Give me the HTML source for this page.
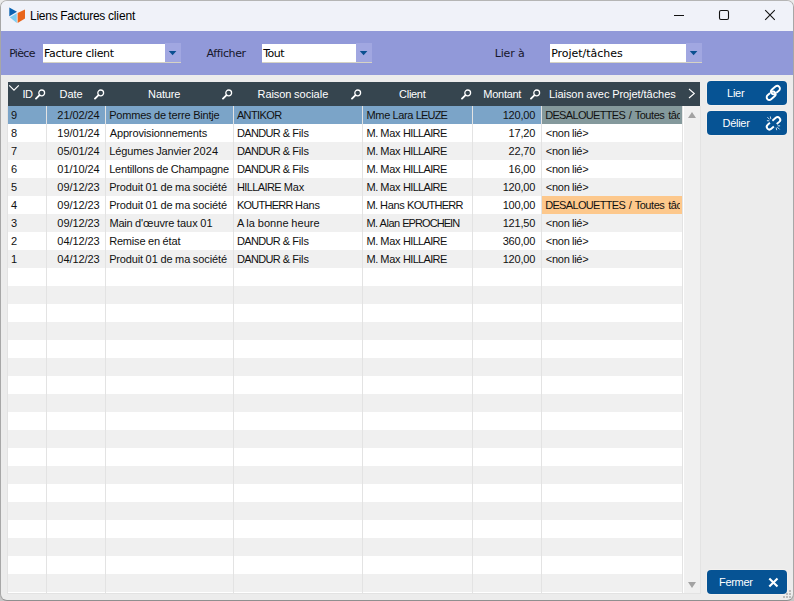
<!DOCTYPE html>
<html><head><meta charset="utf-8"><title>Liens Factures client</title>
<style>
html,body{margin:0;padding:0}
body{width:794px;height:601px;background:linear-gradient(#ebebeb,#ebebeb 50%,#c6c6c6 50%);overflow:hidden;position:relative;font-family:"Liberation Sans",sans-serif}
.abs{position:absolute}
.t{position:absolute;white-space:pre;display:block}
#win{position:absolute;left:0;top:0;width:792px;height:599px;border:1px solid #a7a7a7;border-top-color:#b5b5b5;border-bottom-color:#8f8f8f;border-radius:7px;background:#ececec;overflow:hidden}
#in{position:absolute;left:-1px;top:-1px;width:794px;height:601px}
#title{position:absolute;left:0;top:0;width:794px;height:31px;background:#f0f2f9}
#band{position:absolute;left:0;top:31px;width:794px;height:44px;background:#9199d9}
.sel{position:absolute;top:44px;height:18px;background:#fff;border-bottom:1px solid #d6d3c4}
.arr{position:absolute;top:43px;height:19px;width:16px;background:#a1a7e1;border-bottom:1px solid #d6d3c4}
.arr svg{position:absolute;left:0;top:0}
#hdr{position:absolute;left:8px;top:82px;width:692px;height:24px;background:#36454f}
.row{position:absolute;left:8px;width:674px;height:18px}
.c{position:absolute;top:0;height:18px;overflow:hidden}
.vl{position:absolute;top:106px;width:1px;height:487px;background:#e3e3e3}
.btn{position:absolute;left:707px;width:80px;height:24px;background:#065394;border-radius:4px;box-shadow:0 0 0 1px rgba(255,250,246,.4)}
</style></head><body>
<div id="win"><div id="in">
<div id="title">
<svg class="abs" style="left:9px;top:7px" width="17" height="17" viewBox="0 0 17 17"><polygon points="0.3,0.5 8,4.8 0.3,9.2" fill="#0a63b2"/><polygon points="0.8,10.2 7.8,6.2 7.8,16 " fill="#7fcdf0"/><polygon points="8.6,6 16,2.6 16,11.6 8.6,16" fill="#e9651b"/></svg>
<svg class="abs" style="left:670px;top:5px" width="110" height="20" viewBox="0 0 110 20"><path d="M4 10.500h10" stroke="#111" stroke-width="1" fill="none"/><rect x="49.500" y="5.500" width="9" height="9" rx="1.500" stroke="#111" stroke-width="1.100" fill="none"/><path d="M95.200 5.200l9.600 9.600M104.800 5.200l-9.600 9.600" stroke="#111" stroke-width="1.100" fill="none"/></svg>
</div>
<div id="band"></div>
<div class="sel" style="left:43px;width:122px"></div><div class="arr" style="left:165px"><svg width="16" height="20" viewBox="0 0 16 20"><polygon points="3.800,7.900 11.400,7.900 7.600,12.300" fill="#0a4f90"/></svg></div>
<div class="sel" style="left:262px;width:94px"></div><div class="arr" style="left:356px"><svg width="16" height="20" viewBox="0 0 16 20"><polygon points="3.800,7.900 11.400,7.900 7.600,12.300" fill="#0a4f90"/></svg></div>
<div class="sel" style="left:550px;width:136px"></div><div class="arr" style="left:686px"><svg width="16" height="20" viewBox="0 0 16 20"><polygon points="3.800,7.900 11.400,7.900 7.600,12.300" fill="#0a4f90"/></svg></div>
<div id="hdr"></div>
<svg class="abs" style="left:8px;top:83px" width="14" height="10" viewBox="0 0 14 10"><path d="M1.200 2.300L6 7.200L10.800 2.300" stroke="#fff" stroke-width="1.200" fill="none"/></svg>
<svg class="abs" style="left:686px;top:86px" width="12" height="14" viewBox="0 0 12 14"><path d="M3 3L8.300 7.500L3 12" stroke="#fff" stroke-width="1.100" fill="none"/></svg>

<svg class="abs" style="left:34.5px;top:89px" width="11" height="11" viewBox="0 0 11 11"><circle cx="6.7" cy="3.9" r="2.9" fill="none" stroke="#fff" stroke-width="1.3"/><path d="M4.5 6.1L1 9.6" stroke="#fff" stroke-width="1.9" stroke-linecap="round"/></svg>
<svg class="abs" style="left:93.5px;top:89px" width="11" height="11" viewBox="0 0 11 11"><circle cx="6.7" cy="3.9" r="2.9" fill="none" stroke="#fff" stroke-width="1.3"/><path d="M4.5 6.1L1 9.6" stroke="#fff" stroke-width="1.9" stroke-linecap="round"/></svg>
<svg class="abs" style="left:221.5px;top:89px" width="11" height="11" viewBox="0 0 11 11"><circle cx="6.7" cy="3.9" r="2.9" fill="none" stroke="#fff" stroke-width="1.3"/><path d="M4.5 6.1L1 9.6" stroke="#fff" stroke-width="1.9" stroke-linecap="round"/></svg>
<svg class="abs" style="left:350.5px;top:89px" width="11" height="11" viewBox="0 0 11 11"><circle cx="6.7" cy="3.9" r="2.9" fill="none" stroke="#fff" stroke-width="1.3"/><path d="M4.5 6.1L1 9.6" stroke="#fff" stroke-width="1.9" stroke-linecap="round"/></svg>
<svg class="abs" style="left:460.5px;top:89px" width="11" height="11" viewBox="0 0 11 11"><circle cx="6.7" cy="3.9" r="2.9" fill="none" stroke="#fff" stroke-width="1.3"/><path d="M4.5 6.1L1 9.6" stroke="#fff" stroke-width="1.9" stroke-linecap="round"/></svg>
<svg class="abs" style="left:529.5px;top:89px" width="11" height="11" viewBox="0 0 11 11"><circle cx="6.7" cy="3.9" r="2.9" fill="none" stroke="#fff" stroke-width="1.3"/><path d="M4.5 6.1L1 9.6" stroke="#fff" stroke-width="1.9" stroke-linecap="round"/></svg>
<div class="abs" style="left:7px;top:106px;width:694px;height:488px;background:#e3e3e3"></div>
<div class="abs" style="left:8px;top:106px;width:674px;height:487px;background:#fff"></div>
<div class="abs" style="left:683px;top:106px;width:17px;height:487px;background:#f0f0f0;border-left:1px solid #fff;box-sizing:border-box"></div>
<div class="row" style="top:106px;background:#7ba4c8">
<div class="c" style="left:0px;width:38px;"><span class="t" style="left:2.95px;top:1.19px;font:normal 11px/16px 'Liberation Sans',sans-serif;letter-spacing:0.08px;color:#111">9</span></div>
<div class="c" style="left:39px;width:58px;"><span class="t" style="left:10.35px;top:1.19px;font:normal 11px/16px 'Liberation Sans',sans-serif;letter-spacing:-0.06px;color:#111">21/02/24</span></div>
<div class="c" style="left:98px;width:127px;"><span class="t" style="left:3.20px;top:1.19px;font:normal 11px/16px 'Liberation Sans',sans-serif;letter-spacing:-0.21px;word-spacing:-0.31px;color:#111">Pommes <span style="letter-spacing:-0.10px">de</span> <span style="letter-spacing:-0.10px">terre</span> Bintje</span></div>
<div class="c" style="left:226px;width:128px;"><span class="t" style="left:2.90px;top:1.19px;font:normal 11px/16px 'Liberation Sans',sans-serif;letter-spacing:-0.61px;color:#111">ANTIKOR</span></div>
<div class="c" style="left:355px;width:109px;"><span class="t" style="left:3.55px;top:1.19px;font:normal 11px/16px 'Liberation Sans',sans-serif;letter-spacing:-0.80px;word-spacing:0.23px;color:#111"><span style="letter-spacing:-0.37px">Mme</span> <span style="letter-spacing:-0.32px">Lara</span> LEUZE</span></div>
<div class="c" style="left:465px;width:68px;"><span class="t" style="left:29.65px;top:1.19px;font:normal 11px/16px 'Liberation Sans',sans-serif;letter-spacing:-0.20px;color:#111">120,00</span></div>
<div class="c" style="left:534px;width:140px;background:#84999c;"><div class="c" style="left:0;width:138px"><span class="t" style="left:3.21px;top:1.19px;font:normal 11px/16px 'Liberation Sans',sans-serif;letter-spacing:-0.68px;word-spacing:1.38px;color:#111">DESALOUETTES <span style="letter-spacing:-1.00px">/</span> <span style="letter-spacing:-0.45px">Toutes</span> <span style="letter-spacing:-0.40px">tâches</span></span></div></div>
</div>
<div class="row" style="top:124px;background:#ffffff">
<div class="c" style="left:0px;width:38px;"><span class="t" style="left:2.95px;top:1.19px;font:normal 11px/16px 'Liberation Sans',sans-serif;letter-spacing:0.08px;color:#111">8</span></div>
<div class="c" style="left:39px;width:58px;"><span class="t" style="left:10.35px;top:1.19px;font:normal 11px/16px 'Liberation Sans',sans-serif;letter-spacing:-0.06px;color:#111">19/01/24</span></div>
<div class="c" style="left:98px;width:127px;"><span class="t" style="left:3.70px;top:1.19px;font:normal 11px/16px 'Liberation Sans',sans-serif;letter-spacing:-0.13px;color:#111">Approvisionnements</span></div>
<div class="c" style="left:226px;width:128px;"><span class="t" style="left:3.00px;top:1.19px;font:normal 11px/16px 'Liberation Sans',sans-serif;letter-spacing:-0.66px;word-spacing:0.23px;color:#111">DANDUR <span style="letter-spacing:-0.43px">&amp;</span> <span style="letter-spacing:-0.17px">Fils</span></span></div>
<div class="c" style="left:355px;width:109px;"><span class="t" style="left:3.55px;top:1.19px;font:normal 11px/16px 'Liberation Sans',sans-serif;letter-spacing:-0.67px;word-spacing:0.23px;color:#111"><span style="letter-spacing:-0.55px">M.</span> <span style="letter-spacing:-0.23px">Max</span> HILLAIRE</span></div>
<div class="c" style="left:465px;width:68px;"><span class="t" style="left:35.62px;top:1.19px;font:normal 11px/16px 'Liberation Sans',sans-serif;letter-spacing:-0.22px;color:#111">17,20</span></div>
<div class="c" style="left:534px;width:140px;"><div class="c" style="left:0;width:138px"><span class="t" style="left:3.75px;top:1.19px;font:normal 11px/16px 'Liberation Sans',sans-serif;letter-spacing:-0.26px;word-spacing:-0.32px;color:#111">&lt;non lié&gt;</span></div></div>
</div>
<div class="row" style="top:142px;background:#f0f0f0">
<div class="c" style="left:0px;width:38px;"><span class="t" style="left:2.95px;top:1.19px;font:normal 11px/16px 'Liberation Sans',sans-serif;letter-spacing:0.08px;color:#111">7</span></div>
<div class="c" style="left:39px;width:58px;"><span class="t" style="left:10.35px;top:1.19px;font:normal 11px/16px 'Liberation Sans',sans-serif;letter-spacing:-0.06px;color:#111">05/01/24</span></div>
<div class="c" style="left:98px;width:127px;"><span class="t" style="left:3.20px;top:1.19px;font:normal 11px/16px 'Liberation Sans',sans-serif;letter-spacing:-0.13px;word-spacing:-0.33px;color:#111">Légumes Janvier <span style="letter-spacing:0.10px">2024</span></span></div>
<div class="c" style="left:226px;width:128px;"><span class="t" style="left:3.00px;top:1.19px;font:normal 11px/16px 'Liberation Sans',sans-serif;letter-spacing:-0.66px;word-spacing:0.23px;color:#111">DANDUR <span style="letter-spacing:-0.43px">&amp;</span> <span style="letter-spacing:-0.17px">Fils</span></span></div>
<div class="c" style="left:355px;width:109px;"><span class="t" style="left:3.55px;top:1.19px;font:normal 11px/16px 'Liberation Sans',sans-serif;letter-spacing:-0.67px;word-spacing:0.23px;color:#111"><span style="letter-spacing:-0.55px">M.</span> <span style="letter-spacing:-0.23px">Max</span> HILLAIRE</span></div>
<div class="c" style="left:465px;width:68px;"><span class="t" style="left:35.62px;top:1.19px;font:normal 11px/16px 'Liberation Sans',sans-serif;letter-spacing:-0.22px;color:#111">22,70</span></div>
<div class="c" style="left:534px;width:140px;"><div class="c" style="left:0;width:138px"><span class="t" style="left:3.75px;top:1.19px;font:normal 11px/16px 'Liberation Sans',sans-serif;letter-spacing:-0.26px;word-spacing:-0.32px;color:#111">&lt;non lié&gt;</span></div></div>
</div>
<div class="row" style="top:160px;background:#ffffff">
<div class="c" style="left:0px;width:38px;"><span class="t" style="left:2.95px;top:1.19px;font:normal 11px/16px 'Liberation Sans',sans-serif;letter-spacing:0.08px;color:#111">6</span></div>
<div class="c" style="left:39px;width:58px;"><span class="t" style="left:10.35px;top:1.19px;font:normal 11px/16px 'Liberation Sans',sans-serif;letter-spacing:-0.06px;color:#111">01/10/24</span></div>
<div class="c" style="left:98px;width:127px;"><span class="t" style="left:3.20px;top:1.19px;font:normal 11px/16px 'Liberation Sans',sans-serif;letter-spacing:-0.19px;word-spacing:-0.35px;color:#111">Lentillons <span style="letter-spacing:-0.12px">de</span> <span style="letter-spacing:-0.20px">Champagne</span></span></div>
<div class="c" style="left:226px;width:128px;"><span class="t" style="left:3.00px;top:1.19px;font:normal 11px/16px 'Liberation Sans',sans-serif;letter-spacing:-0.66px;word-spacing:0.23px;color:#111">DANDUR <span style="letter-spacing:-0.43px">&amp;</span> <span style="letter-spacing:-0.17px">Fils</span></span></div>
<div class="c" style="left:355px;width:109px;"><span class="t" style="left:3.55px;top:1.19px;font:normal 11px/16px 'Liberation Sans',sans-serif;letter-spacing:-0.67px;word-spacing:0.23px;color:#111"><span style="letter-spacing:-0.55px">M.</span> <span style="letter-spacing:-0.23px">Max</span> HILLAIRE</span></div>
<div class="c" style="left:465px;width:68px;"><span class="t" style="left:35.62px;top:1.19px;font:normal 11px/16px 'Liberation Sans',sans-serif;letter-spacing:-0.22px;color:#111">16,00</span></div>
<div class="c" style="left:534px;width:140px;"><div class="c" style="left:0;width:138px"><span class="t" style="left:3.75px;top:1.19px;font:normal 11px/16px 'Liberation Sans',sans-serif;letter-spacing:-0.26px;word-spacing:-0.32px;color:#111">&lt;non lié&gt;</span></div></div>
</div>
<div class="row" style="top:178px;background:#f0f0f0">
<div class="c" style="left:0px;width:38px;"><span class="t" style="left:2.95px;top:1.19px;font:normal 11px/16px 'Liberation Sans',sans-serif;letter-spacing:0.08px;color:#111">5</span></div>
<div class="c" style="left:39px;width:58px;"><span class="t" style="left:10.35px;top:1.19px;font:normal 11px/16px 'Liberation Sans',sans-serif;letter-spacing:-0.06px;color:#111">09/12/23</span></div>
<div class="c" style="left:98px;width:127px;"><span class="t" style="left:3.20px;top:1.19px;font:normal 11px/16px 'Liberation Sans',sans-serif;letter-spacing:-0.07px;word-spacing:-0.42px;color:#111"><span style="letter-spacing:-0.17px">Produit</span> <span style="letter-spacing:0.07px">01</span> de ma société</span></div>
<div class="c" style="left:226px;width:128px;"><span class="t" style="left:3.00px;top:1.19px;font:normal 11px/16px 'Liberation Sans',sans-serif;letter-spacing:-0.60px;word-spacing:0.23px;color:#111">HILLAIRE <span style="letter-spacing:-0.17px">Max</span></span></div>
<div class="c" style="left:355px;width:109px;"><span class="t" style="left:3.55px;top:1.19px;font:normal 11px/16px 'Liberation Sans',sans-serif;letter-spacing:-0.67px;word-spacing:0.23px;color:#111"><span style="letter-spacing:-0.55px">M.</span> <span style="letter-spacing:-0.23px">Max</span> HILLAIRE</span></div>
<div class="c" style="left:465px;width:68px;"><span class="t" style="left:29.65px;top:1.19px;font:normal 11px/16px 'Liberation Sans',sans-serif;letter-spacing:-0.20px;color:#111">120,00</span></div>
<div class="c" style="left:534px;width:140px;"><div class="c" style="left:0;width:138px"><span class="t" style="left:3.75px;top:1.19px;font:normal 11px/16px 'Liberation Sans',sans-serif;letter-spacing:-0.26px;word-spacing:-0.32px;color:#111">&lt;non lié&gt;</span></div></div>
</div>
<div class="row" style="top:196px;background:#ffffff">
<div class="c" style="left:0px;width:38px;"><span class="t" style="left:2.95px;top:1.19px;font:normal 11px/16px 'Liberation Sans',sans-serif;letter-spacing:0.08px;color:#111">4</span></div>
<div class="c" style="left:39px;width:58px;"><span class="t" style="left:10.35px;top:1.19px;font:normal 11px/16px 'Liberation Sans',sans-serif;letter-spacing:-0.06px;color:#111">09/12/23</span></div>
<div class="c" style="left:98px;width:127px;"><span class="t" style="left:3.20px;top:1.19px;font:normal 11px/16px 'Liberation Sans',sans-serif;letter-spacing:-0.07px;word-spacing:-0.42px;color:#111"><span style="letter-spacing:-0.17px">Produit</span> <span style="letter-spacing:0.07px">01</span> de ma société</span></div>
<div class="c" style="left:226px;width:128px;"><span class="t" style="left:3.00px;top:1.19px;font:normal 11px/16px 'Liberation Sans',sans-serif;letter-spacing:-0.77px;word-spacing:0.23px;color:#111">KOUTHERR <span style="letter-spacing:-0.28px">Hans</span></span></div>
<div class="c" style="left:355px;width:109px;"><span class="t" style="left:3.55px;top:1.19px;font:normal 11px/16px 'Liberation Sans',sans-serif;letter-spacing:-0.77px;word-spacing:0.23px;color:#111"><span style="letter-spacing:-0.65px">M.</span> <span style="letter-spacing:-0.28px">Hans</span> KOUTHERR</span></div>
<div class="c" style="left:465px;width:68px;"><span class="t" style="left:29.65px;top:1.19px;font:normal 11px/16px 'Liberation Sans',sans-serif;letter-spacing:-0.20px;color:#111">100,00</span></div>
<div class="c" style="left:534px;width:140px;background:#fdc88c;"><div class="c" style="left:0;width:138px"><span class="t" style="left:3.21px;top:1.19px;font:normal 11px/16px 'Liberation Sans',sans-serif;letter-spacing:-0.68px;word-spacing:1.38px;color:#111">DESALOUETTES <span style="letter-spacing:-1.00px">/</span> <span style="letter-spacing:-0.45px">Toutes</span> <span style="letter-spacing:-0.40px">tâches</span></span></div></div>
</div>
<div class="row" style="top:214px;background:#f0f0f0">
<div class="c" style="left:0px;width:38px;"><span class="t" style="left:2.95px;top:1.19px;font:normal 11px/16px 'Liberation Sans',sans-serif;letter-spacing:0.08px;color:#111">3</span></div>
<div class="c" style="left:39px;width:58px;"><span class="t" style="left:10.35px;top:1.19px;font:normal 11px/16px 'Liberation Sans',sans-serif;letter-spacing:-0.06px;color:#111">09/12/23</span></div>
<div class="c" style="left:98px;width:127px;"><span class="t" style="left:3.45px;top:1.19px;font:normal 11px/16px 'Liberation Sans',sans-serif;letter-spacing:-0.10px;word-spacing:-0.36px;color:#111"><span style="letter-spacing:-0.20px">Main</span> d'œuvre <span style="letter-spacing:-0.04px">taux</span> <span style="letter-spacing:0.10px">01</span></span></div>
<div class="c" style="left:226px;width:128px;"><span class="t" style="left:2.90px;top:1.19px;font:normal 11px/16px 'Liberation Sans',sans-serif;letter-spacing:0.06px;word-spacing:-0.42px;color:#111"><span style="letter-spacing:-0.59px">A</span> la bonne heure</span></div>
<div class="c" style="left:355px;width:109px;"><span class="t" style="left:3.55px;top:1.19px;font:normal 11px/16px 'Liberation Sans',sans-serif;letter-spacing:-0.92px;word-spacing:0.23px;color:#111"><span style="letter-spacing:-0.81px">M.</span> <span style="letter-spacing:-0.44px">Alan</span> EPROCHEIN</span></div>
<div class="c" style="left:465px;width:68px;"><span class="t" style="left:29.65px;top:1.19px;font:normal 11px/16px 'Liberation Sans',sans-serif;letter-spacing:-0.20px;color:#111">121,50</span></div>
<div class="c" style="left:534px;width:140px;"><div class="c" style="left:0;width:138px"><span class="t" style="left:3.75px;top:1.19px;font:normal 11px/16px 'Liberation Sans',sans-serif;letter-spacing:-0.26px;word-spacing:-0.32px;color:#111">&lt;non lié&gt;</span></div></div>
</div>
<div class="row" style="top:232px;background:#ffffff">
<div class="c" style="left:0px;width:38px;"><span class="t" style="left:2.95px;top:1.19px;font:normal 11px/16px 'Liberation Sans',sans-serif;letter-spacing:0.08px;color:#111">2</span></div>
<div class="c" style="left:39px;width:58px;"><span class="t" style="left:10.35px;top:1.19px;font:normal 11px/16px 'Liberation Sans',sans-serif;letter-spacing:-0.06px;color:#111">04/12/23</span></div>
<div class="c" style="left:98px;width:127px;"><span class="t" style="left:3.20px;top:1.19px;font:normal 11px/16px 'Liberation Sans',sans-serif;letter-spacing:-0.19px;word-spacing:-0.31px;color:#111">Remise <span style="letter-spacing:-0.08px">en</span> <span style="letter-spacing:-0.08px">état</span></span></div>
<div class="c" style="left:226px;width:128px;"><span class="t" style="left:3.00px;top:1.19px;font:normal 11px/16px 'Liberation Sans',sans-serif;letter-spacing:-0.66px;word-spacing:0.23px;color:#111">DANDUR <span style="letter-spacing:-0.43px">&amp;</span> <span style="letter-spacing:-0.17px">Fils</span></span></div>
<div class="c" style="left:355px;width:109px;"><span class="t" style="left:3.55px;top:1.19px;font:normal 11px/16px 'Liberation Sans',sans-serif;letter-spacing:-0.67px;word-spacing:0.23px;color:#111"><span style="letter-spacing:-0.55px">M.</span> <span style="letter-spacing:-0.23px">Max</span> HILLAIRE</span></div>
<div class="c" style="left:465px;width:68px;"><span class="t" style="left:29.65px;top:1.19px;font:normal 11px/16px 'Liberation Sans',sans-serif;letter-spacing:-0.20px;color:#111">360,00</span></div>
<div class="c" style="left:534px;width:140px;"><div class="c" style="left:0;width:138px"><span class="t" style="left:3.75px;top:1.19px;font:normal 11px/16px 'Liberation Sans',sans-serif;letter-spacing:-0.26px;word-spacing:-0.32px;color:#111">&lt;non lié&gt;</span></div></div>
</div>
<div class="row" style="top:250px;background:#f0f0f0">
<div class="c" style="left:0px;width:38px;"><span class="t" style="left:2.95px;top:1.19px;font:normal 11px/16px 'Liberation Sans',sans-serif;letter-spacing:0.08px;color:#111">1</span></div>
<div class="c" style="left:39px;width:58px;"><span class="t" style="left:10.35px;top:1.19px;font:normal 11px/16px 'Liberation Sans',sans-serif;letter-spacing:-0.06px;color:#111">04/12/23</span></div>
<div class="c" style="left:98px;width:127px;"><span class="t" style="left:3.20px;top:1.19px;font:normal 11px/16px 'Liberation Sans',sans-serif;letter-spacing:-0.07px;word-spacing:-0.42px;color:#111"><span style="letter-spacing:-0.17px">Produit</span> <span style="letter-spacing:0.07px">01</span> de ma société</span></div>
<div class="c" style="left:226px;width:128px;"><span class="t" style="left:3.00px;top:1.19px;font:normal 11px/16px 'Liberation Sans',sans-serif;letter-spacing:-0.66px;word-spacing:0.23px;color:#111">DANDUR <span style="letter-spacing:-0.43px">&amp;</span> <span style="letter-spacing:-0.17px">Fils</span></span></div>
<div class="c" style="left:355px;width:109px;"><span class="t" style="left:3.55px;top:1.19px;font:normal 11px/16px 'Liberation Sans',sans-serif;letter-spacing:-0.67px;word-spacing:0.23px;color:#111"><span style="letter-spacing:-0.55px">M.</span> <span style="letter-spacing:-0.23px">Max</span> HILLAIRE</span></div>
<div class="c" style="left:465px;width:68px;"><span class="t" style="left:29.65px;top:1.19px;font:normal 11px/16px 'Liberation Sans',sans-serif;letter-spacing:-0.20px;color:#111">120,00</span></div>
<div class="c" style="left:534px;width:140px;"><div class="c" style="left:0;width:138px"><span class="t" style="left:3.75px;top:1.19px;font:normal 11px/16px 'Liberation Sans',sans-serif;letter-spacing:-0.26px;word-spacing:-0.32px;color:#111">&lt;non lié&gt;</span></div></div>
</div>
<div class="row" style="top:268px;background:#ffffff">
</div>
<div class="row" style="top:286px;background:#f0f0f0">
</div>
<div class="row" style="top:304px;background:#ffffff">
</div>
<div class="row" style="top:322px;background:#f0f0f0">
</div>
<div class="row" style="top:340px;background:#ffffff">
</div>
<div class="row" style="top:358px;background:#f0f0f0">
</div>
<div class="row" style="top:376px;background:#ffffff">
</div>
<div class="row" style="top:394px;background:#f0f0f0">
</div>
<div class="row" style="top:412px;background:#ffffff">
</div>
<div class="row" style="top:430px;background:#f0f0f0">
</div>
<div class="row" style="top:448px;background:#ffffff">
</div>
<div class="row" style="top:466px;background:#f0f0f0">
</div>
<div class="row" style="top:484px;background:#ffffff">
</div>
<div class="row" style="top:502px;background:#f0f0f0">
</div>
<div class="row" style="top:520px;background:#ffffff">
</div>
<div class="row" style="top:538px;background:#f0f0f0">
</div>
<div class="row" style="top:556px;background:#ffffff">
</div>
<div class="row" style="top:574px;background:#f0f0f0">
</div>
<div class="vl" style="left:46px"></div>
<div class="vl" style="left:105px"></div>
<div class="vl" style="left:233px"></div>
<div class="vl" style="left:362px"></div>
<div class="vl" style="left:472px"></div>
<div class="vl" style="left:541px"></div>
<svg class="abs" style="left:687px;top:111px" width="10" height="8" viewBox="0 0 10 8"><polygon points="1,7 5,1 9,7" fill="#a3a3a3"/></svg>
<svg class="abs" style="left:687px;top:581px" width="10" height="8" viewBox="0 0 10 8"><polygon points="1,1 5,7 9,1" fill="#a3a3a3"/></svg>
<div class="btn" style="top:81px"></div><div class="btn" style="top:111px"></div><div class="btn" style="top:570px"></div>
<div class="abs" style="left:789px;top:590px;width:2px;height:2px;background:#bcbcbc"></div><div class="abs" style="left:786px;top:593px;width:2px;height:2px;background:#bcbcbc"></div><div class="abs" style="left:789px;top:593px;width:2px;height:2px;background:#bcbcbc"></div><div class="abs" style="left:783px;top:596px;width:2px;height:2px;background:#bcbcbc"></div><div class="abs" style="left:786px;top:596px;width:2px;height:2px;background:#bcbcbc"></div><div class="abs" style="left:789px;top:596px;width:2px;height:2px;background:#bcbcbc"></div>
<svg class="abs" style="left:764px;top:84px" width="19" height="19" viewBox="0 0 19 19"><g transform="translate(9.300 8.900) rotate(-41)" fill="none" stroke="#fff" stroke-width="1.900" stroke-linecap="round"><path d="M-0.4 -2.0L-1.2 -2.0A2.7 2.7 0 0 1 -1.2 3.4L-5.8 3.4A2.7 2.7 0 0 1 -5.8 -2.0L-3.2 -2.0"/><path d="M0.4 2.0L1.2 2.0A2.7 2.7 0 0 1 1.2 -3.4L5.8 -3.4A2.7 2.7 0 0 1 5.8 2.0L3.2 2.0"/></g></svg>
<svg class="abs" style="left:764px;top:114px" width="19" height="19" viewBox="0 0 19 19"><g transform="translate(9.500 9.300) rotate(-41)" fill="none" stroke="#fff"><path d="M-2.4 -2.7L-5.3 -2.7A2.7 2.7 0 0 0 -5.3 2.7L-1.9 2.7" stroke-width="1.900"/><path d="M0.9 -2.7L5.3 -2.7A2.7 2.7 0 0 1 5.3 2.7L1.9 2.7" stroke-width="1.900"/><path d="M-0.6 -8.6L-0.4 -5.5M2.1 -7.3L0.8 -5M-3.3 -6.3L-1.5 -4.6M0.6 8.6L0.4 5.5M-2.1 7.3L-0.8 5M3.3 6.3L1.5 4.6" stroke-width="0.750"/></g></svg>
<svg class="abs" style="left:768px;top:577px" width="11" height="11" viewBox="0 0 11 11"><path d="M1.300 1.400l8.200 8.200M9.500 1.400l-8.200 8.200" stroke="#fff" stroke-width="2.100" fill="none"/></svg>

<span class="t" style="left:30.06px;top:8.24px;font:normal 12px/16px 'Liberation Sans',sans-serif;letter-spacing:-0.22px;word-spacing:-0.33px;color:#000"><span style="letter-spacing:-0.26px">Liens</span> Factures <span style="letter-spacing:-0.13px">client</span></span>
<span class="t" style="left:9.17px;top:46.29px;font:normal 11px/16px 'DejaVu Sans',sans-serif;letter-spacing:-0.69px;color:#16162a">Pièce</span>
<span class="t" style="left:44.07px;top:46.29px;font:normal 11px/16px 'DejaVu Sans',sans-serif;letter-spacing:-0.32px;color:#000">Facture client</span>
<span class="t" style="left:206.57px;top:46.29px;font:normal 11px/16px 'DejaVu Sans',sans-serif;letter-spacing:-0.39px;color:#16162a">Afficher</span>
<span class="t" style="left:263.17px;top:46.29px;font:normal 11px/16px 'DejaVu Sans',sans-serif;letter-spacing:-0.48px;color:#000">Tout</span>
<span class="t" style="left:494.67px;top:46.29px;font:normal 11px/16px 'DejaVu Sans',sans-serif;letter-spacing:-0.15px;color:#16162a">Lier à</span>
<span class="t" style="left:551.17px;top:46.29px;font:normal 11px/16px 'DejaVu Sans',sans-serif;letter-spacing:-0.03px;color:#000">Projet/tâches</span>
<span class="t" style="left:22.40px;top:86.19px;font:normal 11px/16px 'Liberation Sans',sans-serif;letter-spacing:-0.57px;color:#fff">ID</span>
<span class="t" style="left:59.61px;top:86.19px;font:normal 11px/16px 'Liberation Sans',sans-serif;letter-spacing:-0.09px;color:#fff">Date</span>
<span class="t" style="left:148.10px;top:86.19px;font:normal 11px/16px 'Liberation Sans',sans-serif;letter-spacing:-0.14px;color:#fff">Nature</span>
<span class="t" style="left:257.61px;top:86.19px;font:normal 11px/16px 'Liberation Sans',sans-serif;letter-spacing:0.02px;word-spacing:-0.42px;color:#fff"><span style="letter-spacing:-0.09px">Raison</span> sociale</span>
<span class="t" style="left:399.11px;top:86.19px;font:normal 11px/16px 'Liberation Sans',sans-serif;letter-spacing:-0.31px;color:#fff">Client</span>
<span class="t" style="left:483.35px;top:86.19px;font:normal 11px/16px 'Liberation Sans',sans-serif;letter-spacing:-0.28px;color:#fff">Montant</span>
<span class="t" style="left:549.00px;top:86.19px;font:normal 11px/16px 'Liberation Sans',sans-serif;letter-spacing:-0.05px;word-spacing:-0.34px;color:#fff"><span style="letter-spacing:-0.06px">Liaison</span> <span style="letter-spacing:0.03px">avec</span> Projet/tâches</span>
<span class="t" style="left:727.00px;top:85.19px;font:normal 11px/16px 'Liberation Sans',sans-serif;letter-spacing:-0.24px;color:#fff">Lier</span>
<span class="t" style="left:722.61px;top:115.19px;font:normal 11px/16px 'Liberation Sans',sans-serif;letter-spacing:-0.31px;color:#fff">Délier</span>
<span class="t" style="left:719.11px;top:574.19px;font:normal 11px/16px 'Liberation Sans',sans-serif;letter-spacing:-0.34px;color:#fff">Fermer</span>
</div></div></body></html>
